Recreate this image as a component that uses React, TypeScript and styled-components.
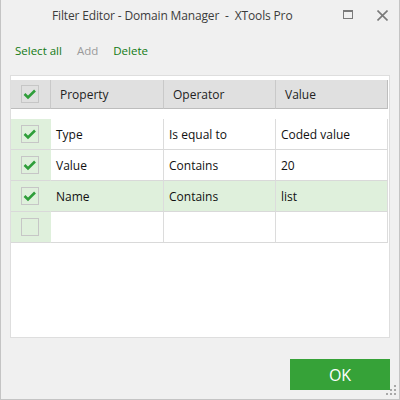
import React from "react";
import styled, { createGlobalStyle } from "styled-components";

const GlobalStyle = createGlobalStyle`
  html, body {
    margin: 0;
    padding: 0;
    background: #f0f0f0;
  }
  body {
    font-family: "Open Sans", "Noto Sans", sans-serif;
  }
`;

const Window = styled.div`
  box-sizing: border-box;
  width: 400px;
  height: 400px;
  background: #f0f0f0;
  border: 1px solid #c4c4c4;
  border-top: none;
  display: flex;
  flex-direction: column;
  position: relative;
  font-size: 12px;
`;

const TitleBar = styled.div`
  height: 30px;
  display: flex;
  align-items: center;
  position: relative;
`;

const Title = styled.div`
  flex: 1;
  padding-left: 51px;
  color: #3c3c3c;
  white-space: pre;
  letter-spacing: -0.15px;
`;

const TitleButton = styled.div`
  width: 34px;
  height: 30px;
  display: flex;
  align-items: center;
  justify-content: center;
`;

const Toolbar = styled.div`
  display: flex;
  gap: 15px;
  padding: 13px 0 0 14px;
  height: 32px;
  box-sizing: border-box;
  font-size: 11.5px;
`;

const ToolLink = styled.span<{ $disabled?: boolean }>`
  color: ${({ $disabled }) => ($disabled ? "#9a9a9a" : "#137a13")};
  cursor: default;
`;

const Panel = styled.div`
  margin: 13px 9px 0 9px;
  height: 263px;
  box-sizing: border-box;
  background: #fff;
  border: 1px solid #dedede;
  padding: 4px 1px 0 0;
`;

const Grid = styled.div`
  display: grid;
  grid-template-columns: 40px 113px 112px 1fr;
`;

const HeaderCell = styled.div<{ $last?: boolean }>`
  height: 28px;
  background: #e0e0e0;
  border-bottom: 1px solid #bdbdbd;
  border-right: 1px solid ${({ $last }) => ($last ? "#bdbdbd" : "#c9c9c9")};
  display: flex;
  align-items: center;
  padding-left: 9px;
  color: #222;
`;

const CheckHeaderCell = styled(HeaderCell)`
  padding-left: 0;
  justify-content: center;
`;

const Spacer = styled.div`
  grid-column: 1 / -1;
  height: 10px;
`;

const Cell = styled.div<{ $active?: boolean }>`
  height: 30px;
  background: ${({ $active }) => ($active ? "#dff0dc" : "#fff")};
  border-bottom: 1px solid #d9d9d9;
  border-right: 1px solid #dcdcdc;
  display: flex;
  align-items: center;
  padding-left: 5px;
  color: #111;
`;

const CheckCell = styled(Cell)`
  padding-left: 0;
  justify-content: center;
  background: #dff0dc;
  border-right-color: #dff0dc;
`;

const Box = styled.div`
  box-sizing: border-box;
  width: 18px;
  height: 18px;
  border: 1px solid #c6c6c6;
  display: flex;
  align-items: center;
  justify-content: center;
  margin-left: -2px;
`;

const Footer = styled.div`
  display: flex;
  justify-content: flex-end;
  padding: 21px 9px 0 0;
`;

const OkButton = styled.button`
  width: 100px;
  height: 31px;
  border: none;
  background: #36a238;
  color: #fff;
  font-family: inherit;
  font-size: 16px;
  cursor: pointer;
`;

const Grip = styled.svg`
  position: absolute;
  right: 2px;
  bottom: 2px;
`;

const Check = () => (
  <svg width="14" height="12" viewBox="0 0 14 12">
    <path d="M1.5 6 L5 9.5 L12 2.5" fill="none" stroke="#2f9e3a" strokeWidth="2.6" />
  </svg>
);

const CheckBox = ({ checked }: { checked?: boolean }) => (
  <Box>{checked && <Check />}</Box>
);

const rows = [
  { checked: true, property: "Type", operator: "Is equal to", value: "Coded value" },
  { checked: true, property: "Value", operator: "Contains", value: "20" },
  { checked: true, property: "Name", operator: "Contains", value: "list", active: true },
  { checked: false, property: "", operator: "", value: "" },
];

export default function App() {
  return (
    <>
      <GlobalStyle />
      <Window>
        <TitleBar>
          <Title>Filter Editor - Domain Manager  -  XTools Pro</Title>
          <TitleButton>
            <svg width="11" height="10" viewBox="0 0 11 10">
              <rect x="0.5" y="0.5" width="9" height="8" fill="none" stroke="#7a7a7a" />
              <rect x="0" y="0" width="10" height="2" fill="#7a7a7a" />
            </svg>
          </TitleButton>
          <TitleButton>
            <svg width="11" height="11" viewBox="0 0 11 11">
              <path d="M0.5 0.5 L10.5 10.5 M10.5 0.5 L0.5 10.5" stroke="#7a7a7a" strokeWidth="1.6" />
            </svg>
          </TitleButton>
        </TitleBar>
        <Toolbar>
          <ToolLink>Select all</ToolLink>
          <ToolLink $disabled>Add</ToolLink>
          <ToolLink>Delete</ToolLink>
        </Toolbar>
        <Panel>
          <Grid>
            <CheckHeaderCell>
              <CheckBox checked />
            </CheckHeaderCell>
            <HeaderCell>Property</HeaderCell>
            <HeaderCell>Operator</HeaderCell>
            <HeaderCell $last>Value</HeaderCell>
            <Spacer />
            {rows.map((r, i) => (
              <React.Fragment key={i}>
                <CheckCell>
                  <CheckBox checked={r.checked} />
                </CheckCell>
                <Cell $active={r.active}>{r.property}</Cell>
                <Cell $active={r.active}>{r.operator}</Cell>
                <Cell $active={r.active}>{r.value}</Cell>
              </React.Fragment>
            ))}
          </Grid>
        </Panel>
        <Footer>
          <OkButton>OK</OkButton>
        </Footer>
        <Grip width="12" height="12" viewBox="0 0 12 12">
          <rect x="9" y="0" width="2" height="2" fill="#a8a8a8" />
          <rect x="5" y="4" width="2" height="2" fill="#a8a8a8" />
          <rect x="9" y="4" width="2" height="2" fill="#a8a8a8" />
          <rect x="1" y="8" width="2" height="2" fill="#a8a8a8" />
          <rect x="5" y="8" width="2" height="2" fill="#a8a8a8" />
          <rect x="9" y="8" width="2" height="2" fill="#a8a8a8" />
        </Grip>
      </Window>
    </>
  );
}
